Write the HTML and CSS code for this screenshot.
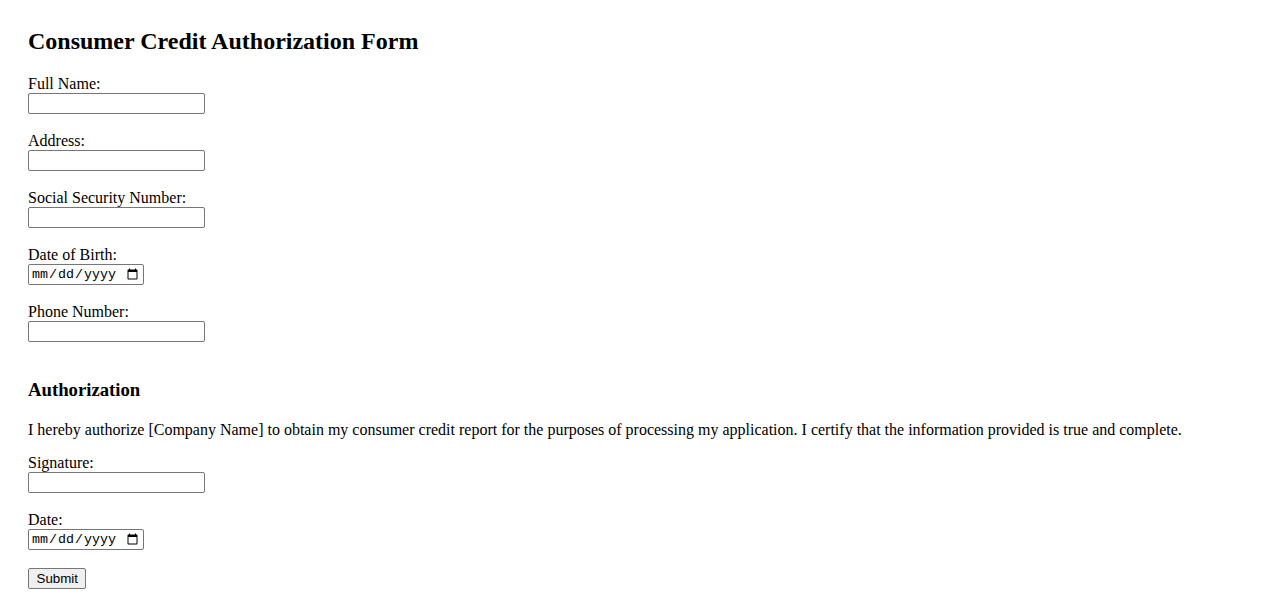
FILE: index.html
```html
<!DOCTYPE html>
<html lang="en">
<head>
<meta charset="utf-8">
<title>Consumer Credit Authorization Form</title>
<link rel="stylesheet" href="styles.css">
</head>
<body>
<div class="page">
  <h2 class="title">Consumer Credit Authorization Form</h2>
  <form class="form">
    <label class="label" for="name">Full Name:</label><br>
    <input class="text-input" type="text" id="name"><br><br>

    <label class="label" for="address">Address:</label><br>
    <input class="text-input" type="text" id="address"><br><br>

    <label class="label" for="ssn">Social Security Number:</label><br>
    <input class="text-input" type="text" id="ssn"><br><br>

    <label class="label" for="dob">Date of Birth:</label><br>
    <input class="date-input" type="date" id="dob"><br><br>

    <label class="label" for="phone">Phone Number:</label><br>
    <input class="text-input" type="tel" id="phone"><br><br>

    <h3 class="section-title">Authorization</h3>
    <p class="statement">I hereby authorize [Company Name] to obtain my consumer credit report for the purposes of processing my application. I certify that the information provided is true and complete.</p>

    <label class="label" for="signature">Signature:</label><br>
    <input class="text-input" type="text" id="signature"><br><br>

    <label class="label" for="date">Date:</label><br>
    <input class="date-input" type="date" id="date"><br><br>

    <button class="submit" type="submit">Submit</button>
  </form>
</div>
</body>
</html>
```

FILE: styles.css
```css
html, body {
  margin: 0;
  padding: 0;
  background: #ffffff;
}

body {
  font-family: "Liberation Serif", "Times New Roman", serif;
  font-size: 16px;
  color: #000000;
}

.page {
  padding: 28px;
}

.title {
  font-size: 24px;
  font-weight: bold;
  margin: 0 0 19.92px 0;
}

.form {
  margin: 0;
}

.section-title {
  font-size: 18.72px;
  font-weight: bold;
  margin: 18.72px 0 20.5px 0;
}

.statement {
  margin: 0 0 15px 0;
}

.text-input {
  font-family: "Liberation Sans", Arial, sans-serif;
  font-size: 13.333px;
  width: 177px;
  height: 21px;
  box-sizing: border-box;
  padding: 1px 2px;
  border: 1px solid #767676;
  border-radius: 2px;
  margin: 0;
}

.date-input {
  font-family: "Liberation Mono", "DejaVu Sans Mono", monospace;
  font-size: 13.333px;
  width: 116px;
  height: 21px;
  box-sizing: border-box;
  padding: 1px 2px;
  border: 1px solid #767676;
  border-radius: 2px;
  margin: 0;
}

.submit {
  font-family: "Liberation Sans", Arial, sans-serif;
  font-size: 13.333px;
  height: 21px;
  padding: 1px 7.5px;
  border: 1px solid #767676;
  border-radius: 2px;
  background: #efefef;
  color: #000000;
  margin: 0;
}
```
